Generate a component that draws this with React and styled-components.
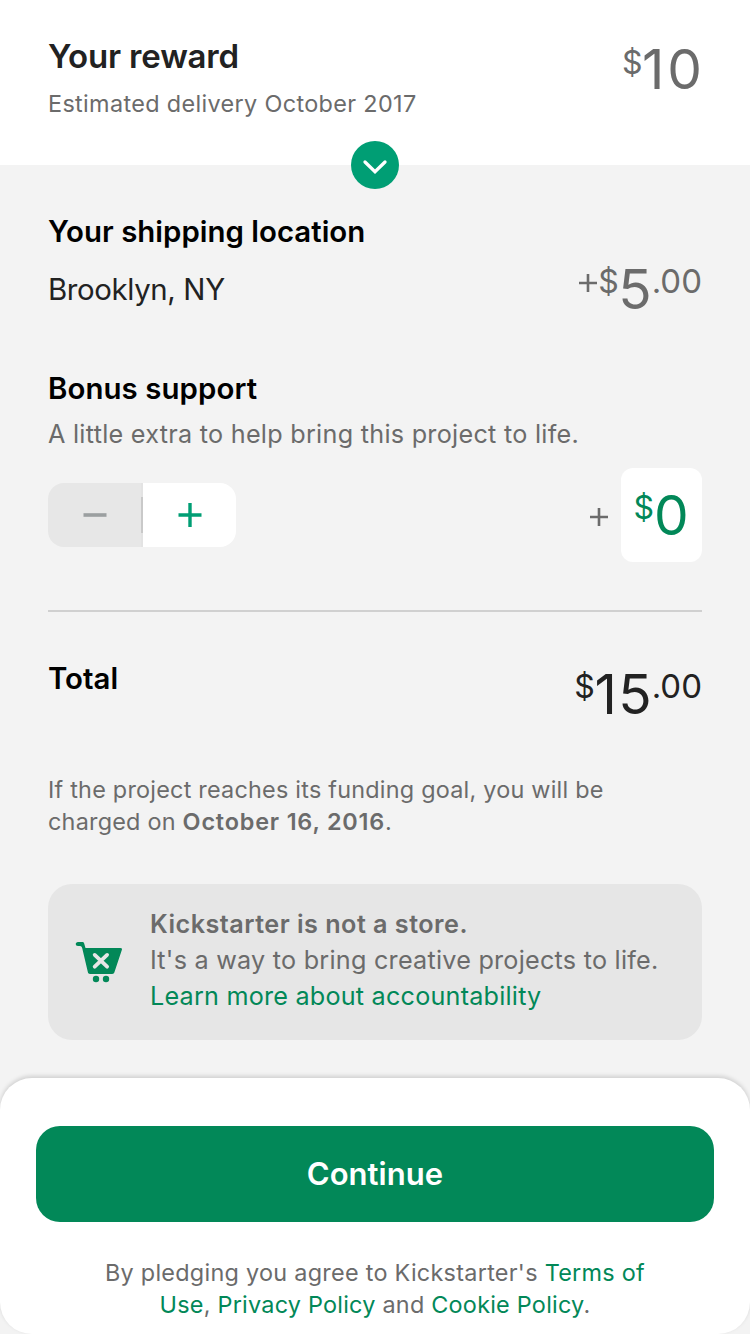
import React from 'react';
import styled, { createGlobalStyle } from 'styled-components';

const GlobalStyle = createGlobalStyle`
  * { box-sizing: border-box; }
  body {
    margin: 0;
    background: #f3f3f3;
    font-family: Inter, "Liberation Sans", sans-serif;
    -webkit-font-smoothing: antialiased;
  }
`;

const green = '#028858';
const gray = '#6b6b6b';

const Screen = styled.main`
  width: 750px;
  height: 1334px;
  display: flex;
  flex-direction: column;
  background: #f3f3f3;
  overflow: hidden;
`;

const Header = styled.header`
  position: relative;
  flex: none;
  height: 165px;
  padding: 36px 48px 0;
  display: flex;
  justify-content: space-between;
  background: #fff;
`;

const Expand = styled.button`
  position: absolute;
  left: 351px;
  bottom: -24px;
  width: 48px;
  height: 48px;
  padding: 0;
  border: 0;
  border-radius: 50%;
  background: #009e74;
  svg { display: block; }
`;

const Title = styled.h2`
  margin: 0;
  font-weight: 600;
  font-size: ${p => p.$size || 29.4}px;
  line-height: 40px;
  letter-spacing: ${p => p.$track || 0}px;
  color: ${p => p.$color || '#000'};
  white-space: nowrap;
`;

const Copy = styled.p`
  margin: ${p => p.$top || 0}px 0 0;
  font-size: ${p => p.$size || 23.4}px;
  line-height: ${p => p.$line || 32}px;
  letter-spacing: ${p => p.$track || 0}px;
  color: ${p => p.$color || gray};
  white-space: nowrap;
`;

const Line = styled.span`
  display: block;
  letter-spacing: ${p => p.$track || 0}px;
`;

const Strong = styled.strong`
  font-weight: 600;
  letter-spacing: ${p => p.$track || 0}px;
`;

const Link = styled.a`
  color: ${green};
  text-decoration: none;
`;

const Content = styled.section`
  flex: none;
  height: 913px;
  padding: 47px 48px 0;
`;

const Row = styled.div`
  display: flex;
  justify-content: space-between;
  align-items: flex-start;
  height: ${p => p.$height}px;
`;

const Price = styled.div`
  display: flex;
  align-items: flex-start;
  margin-top: ${p => p.$top || 0}px;
  color: ${p => p.$color || gray};
  white-space: nowrap;
`;

const Whole = styled.span`
  margin-right: ${p => -(p.$track || 0)}px;
  font-size: 55px;
  line-height: 60px;
  letter-spacing: ${p => p.$track || 0}px;
`;

const Currency = styled.span`
  margin: ${p => p.$drop || 0}px ${p => p.$gap || 0}px 0 0;
  font-size: 32px;
  line-height: 45px;
`;

const Cents = styled.span`
  font-size: 33px;
  line-height: 45px;
`;

const PlusSign = styled.svg`
  display: block;
  margin: ${p => p.$top}px ${p => p.$right}px 0 0;
`;

const Stepper = styled.div`
  display: flex;
  width: 188px;
  height: 64px;
  margin-top: 15px;
  border-radius: 16px;
  overflow: hidden;
`;

const Step = styled.button`
  display: flex;
  align-items: center;
  justify-content: center;
  width: 93px;
  height: 64px;
  padding: 0;
  border: 0;
  background: ${p => p.$bg};
`;

const StepDivider = styled.span`
  width: 2px;
  height: 64px;
  background: linear-gradient(#e3e3e3 14px, #c9c9c9 14px, #c9c9c9 50px, #e3e3e3 50px);
`;

const BonusRow = styled(Row)`
  margin-top: 18px;
`;

const Amount = styled.div`
  display: flex;
  align-items: flex-start;
`;

const AmountBox = styled.div`
  display: flex;
  justify-content: center;
  width: 81px;
  height: 94px;
  padding-right: 1px;
  border-radius: 12px;
  background: #fff;
`;

const Rule = styled.hr`
  height: 2px;
  margin: 0 0 47px;
  border: 0;
  background: #d0d0d0;
`;

const Notice = styled.aside`
  display: flex;
  height: 156px;
  margin-top: 46px;
  padding: 22px 27px;
  border-radius: 24px;
  background: #e6e6e6;
`;

const Cart = styled.svg`
  flex: none;
  margin: 34px 27px 0 0;
`;

const Sheet = styled.footer`
  flex: none;
  height: 256px;
  padding: 48px 36px 0;
  border-radius: 32px;
  background: #fff;
  box-shadow: 0 -2px 4px rgba(0, 0, 0, 0.15);
`;

const Continue = styled.button`
  display: block;
  width: 678px;
  height: 96px;
  padding: 0;
  border: 0;
  border-radius: 24px;
  background: ${green};
  color: #fff;
  font: 600 31px/96px Inter, "Liberation Sans", sans-serif;
  letter-spacing: 0.05px;
`;

const Legal = styled(Copy)`
  text-align: center;
`;

function Plus({ top, right }) {
  return (
    <PlusSign $top={top} $right={right} width="18" height="18" viewBox="0 0 18 18">
      <path d="M0 9H18M9 0V18" stroke={gray} strokeWidth="2.6" />
    </PlusSign>
  );
}

export default function App() {
  return (
    <Screen>
      <GlobalStyle />
      <Header>
        <div>
          <Title $size={33} $track={-0.18} $color="#222">Your reward</Title>
          <Copy $top={11.5} $track={0.35}>Estimated delivery October 2017</Copy>
        </div>
        <Price $top={3}>
          <Currency $gap={-0.5} $drop={1}>$</Currency>
          <Whole $track={3}>10</Whole>
        </Price>
        <Expand aria-label="Expand reward">
          <svg width="48" height="48" viewBox="0 0 48 48">
            <path d="M14 21L24 30.6L34 21" fill="none" stroke="#fff" strokeWidth="3.3" strokeLinecap="round" />
          </svg>
        </Expand>
      </Header>

      <Content>
        <Row $height={157}>
          <div>
            <Title $track={0.02}>Your shipping location</Title>
            <Copy $top={18} $size={29.4} $line={40} $track={-0.37} $color="#222">Brooklyn, NY</Copy>
          </div>
          <Price $top={46.5}>
            <Plus top={15.5} right={1} />
            <Currency $gap={-0.5}>$</Currency>
            <Whole>5</Whole>
            <Cents>.00</Cents>
          </Price>
        </Row>

        <Title $track={0.08}>Bonus support</Title>
        <Copy $top={9} $size={25.2} $track={0.27}>A little extra to help bring this project to life.</Copy>
        <BonusRow $height={142}>
          <Stepper>
            <Step $bg="#e7e7e7" aria-label="Decrease">
              <svg width="24" height="24" viewBox="0 0 24 24">
                <path d="M0.5 12H23.5" stroke="#9b9fa0" strokeWidth="3.6" />
              </svg>
            </Step>
            <StepDivider />
            <Step $bg="#fff" aria-label="Increase">
              <svg width="24" height="24" viewBox="0 0 24 24">
                <path d="M0.5 12H23.5M12 0V24" stroke="#009e74" strokeWidth="3.4" />
              </svg>
            </Step>
          </Stepper>
          <Amount>
            <Plus top={40} right={13} />
            <AmountBox>
              <Price $top={17} $color={green}>
                <Currency>$</Currency>
                <Whole>0</Whole>
              </Price>
            </AmountBox>
          </Amount>
        </BonusRow>
        <Rule />

        <Row $height={115}>
          <Title>Total</Title>
          <Price $top={5} $color="#222">
            <Currency $gap={-0.5}>$</Currency>
            <Whole $track={1.5}>15</Whole>
            <Cents>.00</Cents>
          </Price>
        </Row>

        <Copy>
          <Line $track={0.23}>If the project reaches its funding goal, you will be</Line>
          <Line $track={0.23}>charged on <Strong $track={0.82}>October 16, 2016</Strong>.</Line>
        </Copy>

        <Notice>
          <Cart width="48" height="44" viewBox="0 0 48 44">
            <path d="M3 2H7.3C8.3 2 8.8 2.5 9.1 3.3L10.5 8H45.5C46.8 8 47.3 8.8 46.9 9.8L39.4 32.3C39 33.5 38.4 34 37.2 34H15C13.8 34 13.2 33.5 12.9 32.3L7.3 8.4C7 7 6.4 6 5 6H3C0 6 0 2 3 2Z" fill={green} />
            <path d="M19.7 14.9L32.1 26.7M32.1 14.9L19.7 26.7" stroke="#e6e6e6" strokeWidth="3.8" strokeLinecap="round" />
            <circle cx="21" cy="39" r="3.2" fill={green} />
            <circle cx="31" cy="39" r="3.2" fill={green} />
          </Cart>
          <Copy $size={25.2} $line={36}>
            <Line><Strong $track={0.48}>Kickstarter is not a store.</Strong></Line>
            <Line $track={0.24}>It's a way to bring creative projects to life.</Line>
            <Line $track={0.21}><Link>Learn more about accountability</Link></Line>
          </Copy>
        </Notice>
      </Content>

      <Sheet>
        <Continue>Continue</Continue>
        <Legal $top={35}>
          <Line $track={0.28}>By pledging you agree to Kickstarter's <Link>Terms of</Link></Line>
          <Line $track={0.24}><Link>Use</Link>, <Link>Privacy Policy</Link> and <Link>Cookie Policy</Link>.</Line>
        </Legal>
      </Sheet>
    </Screen>
  );
}
